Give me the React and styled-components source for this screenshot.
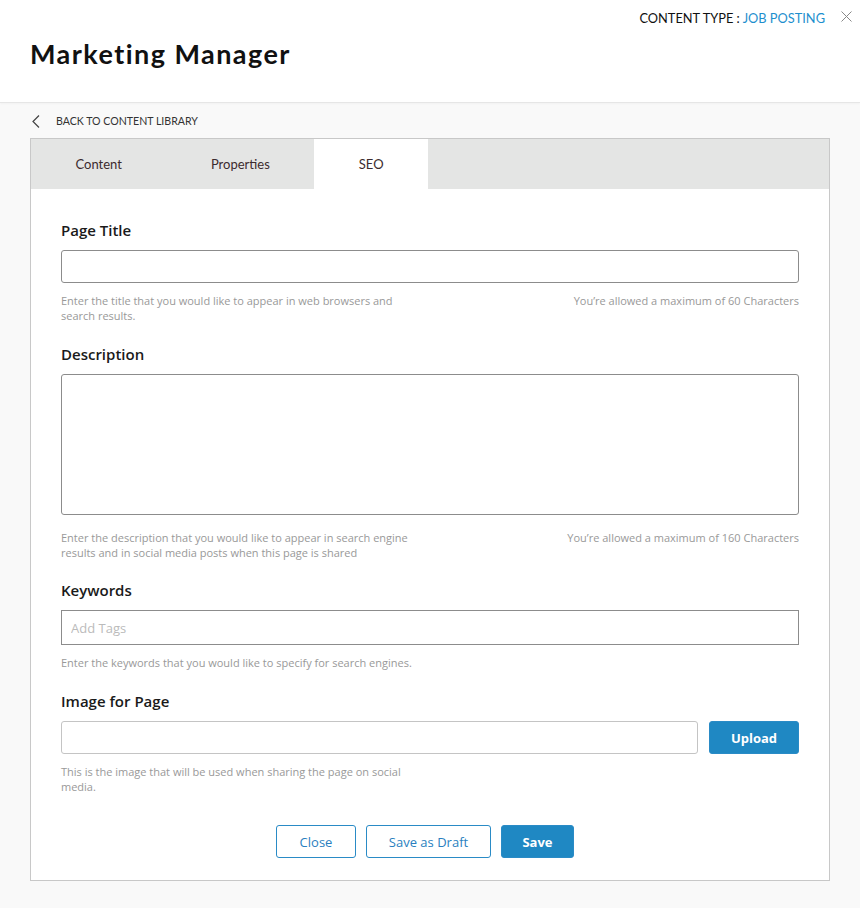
import React from "react";
import styled, { createGlobalStyle } from "styled-components";

const GlobalStyle = createGlobalStyle`
  html, body { margin: 0; padding: 0; }
  body {
    background: #f9f9f9;
    font-family: Lato, "Open Sans", Arial, sans-serif;
    color: #222;
  }
  * { box-sizing: border-box; }
`;

const Header = styled.header`
  background: #fff;
  height: 103px;
  border-bottom: 1px solid #e6e6e6;
  box-shadow: 0 1px 2px rgba(0, 0, 0, 0.03);
  padding: 9px 8px 0 31px;
  display: flex;
  flex-direction: column;
`;

const MetaRow = styled.div`
  display: flex;
  justify-content: flex-end;
  align-items: center;
  gap: 16px;
  height: 17px;
`;

const Meta = styled.span`
  font-size: 12.8px;
  color: #111;
`;

const MetaValue = styled.span`
  color: #1e8fce;
`;

const CloseIcon = styled.svg`
  width: 11px;
  height: 11px;
  display: block;
  margin-top: -3px;
`;

const Title = styled.h1`
  margin: 12px 0 0 -1px;
  font-size: 27px;
  font-weight: 700;
  letter-spacing: 1.45px;
  color: #111;
  line-height: 32px;
`;

const Main = styled.main`
  padding: 0 30px 28px;
`;

const BackRow = styled.div`
  height: 35px;
  display: flex;
  align-items: center;
  gap: 16px;
  padding-left: 2px;
  padding-top: 1px;
`;

const BackText = styled.span`
  font-size: 10.6px;
  color: #333;
  text-transform: uppercase;
`;

const Card = styled.section`
  background: #fff;
  border: 1px solid #c8c8c8;
`;

const TabBar = styled.nav`
  display: flex;
  background: #e4e5e4;
  height: 50px;
`;

const Tab = styled.div`
  padding: 0 44.5px;
  display: flex;
  align-items: center;
  font-size: 13px;
  color: #3c2b2e;
  background: ${(p) => (p.$active ? "#fff" : "transparent")};
`;

const Form = styled.div`
  padding: 31px 30px 22px;
  display: flex;
  flex-direction: column;
  font-family: "Open Sans", Lato, Arial, sans-serif;
`;

const Field = styled.div`
  display: flex;
  flex-direction: column;
  margin-bottom: ${(p) => p.$mb || 21}px;
`;

const Label = styled.label`
  font-size: 15px;
  line-height: 20px;
  font-weight: 600;
  color: #1a1a1a;
  margin-bottom: 10px;
`;

const TextInput = styled.input`
  display: block;
  width: 100%;
  height: ${(p) => p.$h || 33}px;
  border: 1px solid ${(p) => p.$border || "#8c8c8c"};
  border-radius: ${(p) => (p.$square ? 0 : 3)}px;
  padding: 0 9px;
  font-family: inherit;
  font-size: 13px;
  color: #333;
  background: #fff;
  outline: none;
  &::placeholder { color: #bbb; }
`;

const TextArea = styled.textarea`
  display: block;
  width: 100%;
  height: 141px;
  border: 1px solid #8c8c8c;
  border-radius: 3px;
  resize: none;
  font-family: inherit;
  outline: none;
`;

const HelpRow = styled.div`
  display: flex;
  justify-content: space-between;
  align-items: flex-start;
  margin-top: ${(p) => p.$mt || 10}px;
`;

const Help = styled.p`
  margin: 0;
  font-size: 11px;
  line-height: 15px;
  color: #999;
  max-width: 366px;
`;

const HelpRight = styled(Help)`
  text-align: right;
  max-width: none;
`;

const UploadRow = styled.div`
  display: flex;
  gap: 11px;
`;

const Button = styled.button`
  height: 33px;
  padding: 0;
  white-space: nowrap;
  border-radius: 3px;
  font-family: inherit;
  font-size: 13px;
  cursor: pointer;
  border: 1px solid #2a8bc6;
  background: ${(p) => (p.$primary ? "#1f88c3" : "#fff")};
  color: ${(p) => (p.$primary ? "#fff" : "#2a7fc0")};
  font-weight: ${(p) => (p.$primary ? 700 : 400)};
  flex-shrink: 0;
  width: ${(p) => p.$w}px;
`;

const Actions = styled.div`
  display: flex;
  justify-content: center;
  gap: 10px;
  padding-right: 10px;
  margin-top: 10px;
`;

export default function App() {
  return (
    <>
      <GlobalStyle />
      <Header>
        <MetaRow>
          <Meta>
            CONTENT TYPE : <MetaValue>JOB POSTING</MetaValue>
          </Meta>
          <CloseIcon viewBox="0 0 11 11">
            <path d="M0.5 0.5 L10.5 10.5 M10.5 0.5 L0.5 10.5" stroke="#888" strokeWidth="1" fill="none" />
          </CloseIcon>
        </MetaRow>
        <Title>Marketing Manager</Title>
      </Header>
      <Main>
        <BackRow>
          <svg width="8" height="13" viewBox="0 0 8 13">
            <polyline points="7,0.5 1,6.5 7,12.5" stroke="#444" strokeWidth="1.2" fill="none" />
          </svg>
          <BackText>Back to Content Library</BackText>
        </BackRow>
        <Card>
          <TabBar>
            <Tab>Content</Tab>
            <Tab>Properties</Tab>
            <Tab $active>SEO</Tab>
          </TabBar>
          <Form>
            <Field>
              <Label>Page Title</Label>
              <TextInput />
              <HelpRow>
                <Help>Enter the title that you would like to appear in web browsers and search results.</Help>
                <HelpRight>You’re allowed a maximum of 60 Characters</HelpRight>
              </HelpRow>
            </Field>
            <Field $mb={20}>
              <Label>Description</Label>
              <TextArea />
              <HelpRow $mt={15}>
                <Help>Enter the description that you would like to appear in search engine results and in social media posts when this page is shared</Help>
                <HelpRight>You’re allowed a maximum of 160 Characters</HelpRight>
              </HelpRow>
            </Field>
            <Field>
              <Label>Keywords</Label>
              <TextInput $h={35} $square placeholder="Add Tags" />
              <HelpRow>
                <Help>Enter the keywords that you would like to specify for search engines.</Help>
              </HelpRow>
            </Field>
            <Field>
              <Label>Image for Page</Label>
              <UploadRow>
                <TextInput $border="#c4c4c4" />
                <Button $primary $w={90}>Upload</Button>
              </UploadRow>
              <HelpRow>
                <Help>This is the image that will be used when sharing the page on social media.</Help>
              </HelpRow>
            </Field>
            <Actions>
              <Button $w={80}>Close</Button>
              <Button $w={125}>Save as Draft</Button>
              <Button $primary $w={73}>Save</Button>
            </Actions>
          </Form>
        </Card>
      </Main>
    </>
  );
}
